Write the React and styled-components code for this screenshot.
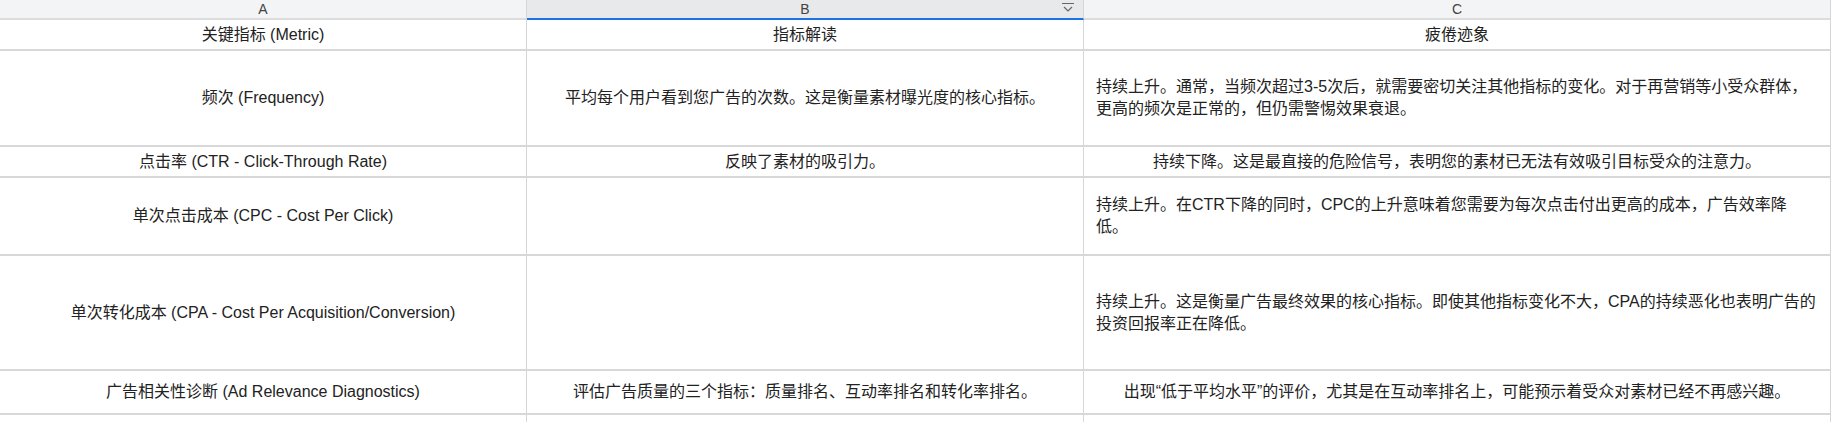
import React from "react";
import styled, { createGlobalStyle } from "styled-components";

const Global = createGlobalStyle`
  body { margin: 0; background: #fff; font-family: "Liberation Sans", Arial, "Noto Sans CJK SC", sans-serif; }
`;

const Sheet = styled.div`
  display: grid;
  grid-template-columns: 527px 557px 747px;
  width: 1831px;
  overflow: hidden;
  height: 422px;
`;

const ColHead = styled.div`
  height: 18px;
  background: ${(p) => (p.$active ? "#e8e9eb" : "#f3f4f5")};
  border-bottom: 2px solid ${(p) => (p.$active ? "#1a73e8" : "#dcdcdc")};
  border-right: 1px solid #d6d6d6;
  color: #444;
  font-size: 14px;
  display: flex;
  align-items: center;
  justify-content: center;
  position: relative;
  line-height: 1;
`;

const Caret = styled.svg`
  position: absolute;
  right: 8px;
  top: 2px;
`;

const Cell = styled.div`
  height: ${(p) => p.$h}px;
  box-sizing: border-box;
  border-bottom: 2px solid #d8d8d8;
  border-right: 1px solid #d6d6d6;
  display: flex;
  align-items: center;
  justify-content: center;
  text-align: ${(p) => (p.$left ? "left" : "center")};
  padding: 0 12px;
  font-size: 16px;
  line-height: 22px;
  color: #222;
`;

const heights = [31, 96, 31, 78, 115, 44, 40];

const rows = [
  ["关键指标 (Metric)", "指标解读", "疲倦迹象"],
  ["频次 (Frequency)", "平均每个用户看到您广告的次数。这是衡量素材曝光度的核心指标。", "持续上升。通常，当频次超过3-5次后，就需要密切关注其他指标的变化。对于再营销等小受众群体，更高的频次是正常的，但仍需警惕效果衰退。"],
  ["点击率 (CTR - Click-Through Rate)", "反映了素材的吸引力。", "持续下降。这是最直接的危险信号，表明您的素材已无法有效吸引目标受众的注意力。"],
  ["单次点击成本 (CPC - Cost Per Click)", "", "持续上升。在CTR下降的同时，CPC的上升意味着您需要为每次点击付出更高的成本，广告效率降低。"],
  ["单次转化成本 (CPA - Cost Per Acquisition/Conversion)", "", "持续上升。这是衡量广告最终效果的核心指标。即使其他指标变化不大，CPA的持续恶化也表明广告的投资回报率正在降低。"],
  ["广告相关性诊断 (Ad Relevance Diagnostics)", "评估广告质量的三个指标：质量排名、互动率排名和转化率排名。", "出现“低于平均水平”的评价，尤其是在互动率排名上，可能预示着受众对素材已经不再感兴趣。"],
  ["", "", ""],
];

export default function App() {
  return (
    <>
      <Global />
      <Sheet>
        <ColHead>A</ColHead>
        <ColHead $active>
          B
          <Caret width="14" height="12" viewBox="0 0 14 12" fill="none" stroke="#666" strokeWidth="1.2">
            <path d="M1 1.5h12M3 5l4 4 4-4" />
          </Caret>
        </ColHead>
        <ColHead>C</ColHead>
        {rows.map((r, i) =>
          r.map((t, j) => (
            <Cell key={`${i}-${j}`} $h={heights[i]} $left={j === 2 && t.length > 42}>
              {t}
            </Cell>
          ))
        )}
      </Sheet>
    </>
  );
}
